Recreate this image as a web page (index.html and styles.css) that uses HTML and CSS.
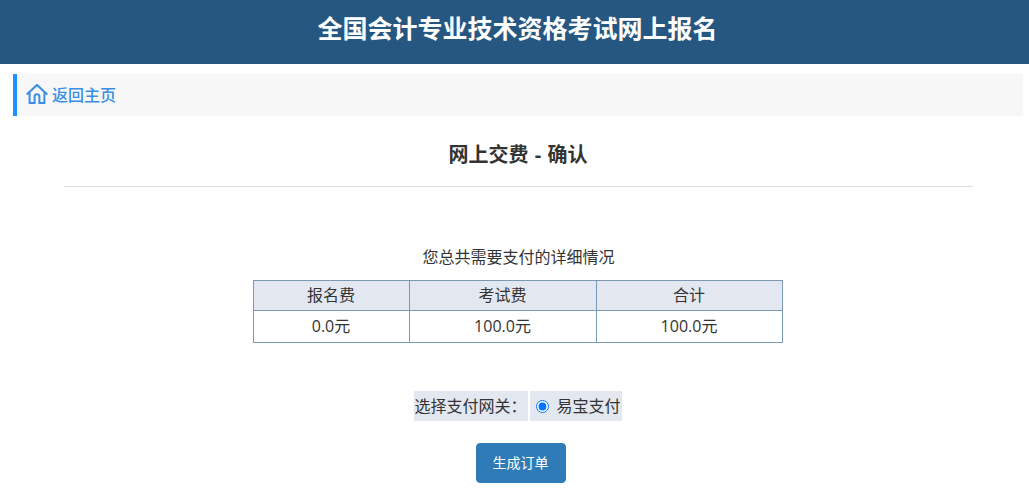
FILE: index.html
```html
<!DOCTYPE html>
<html lang="zh-CN">
<head>
<meta charset="utf-8">
<title>全国会计专业技术资格考试网上报名</title>
<link rel="stylesheet" href="styles.css">
</head>
<body>
<header class="site-header"><h1>全国会计专业技术资格考试网上报名</h1></header>
<nav class="back-bar">
  <a class="back-link" href="#">
    <svg class="home-icon" viewBox="0 0 22 20" width="22" height="20" aria-hidden="true"><path d="M.7 10.600 11 .9l10.300 9.700M3.600 8v11h5v-6.300a2.400 2.400 0 0 1 4.800 0V19h5V8" fill="none" stroke="currentColor" stroke-width="2"/></svg>
    <span>返回主页</span>
  </a>
</nav>
<main class="content">
  <h2 class="page-title">网上交费 - 确认</h2>
  <p class="summary">您总共需要支付的详细情况</p>
  <table class="fees">
    <tr class="head"><th class="c1">报名费</th><th class="c2">考试费</th><th class="c3">合计</th></tr>
    <tr><td>0.0元</td><td>100.0元</td><td>100.0元</td></tr>
  </table>
  <form class="pay">
    <div class="gateway">
      <span class="cell">选择支付网关：</span>
      <label class="cell option"><input type="radio" name="gw" checked><span>易宝支付</span></label>
    </div>
    <button type="button" class="submit">生成订单</button>
  </form>
</main>
</body>
</html>
```
FILE: styles.css
```css
* { box-sizing: border-box; }
html, body { margin: 0; padding: 0; }
body { background: #fff; color: #333; font-family: "Open Sans", "Noto Sans CJK SC", sans-serif; font-size: 16px; }
.site-header { height: 64px; padding-left: 6px; background: #265781; display: flex; align-items: center; justify-content: center; }
.site-header h1 { margin: 0 0 8px; color: #fff; font-size: 25px; font-weight: 700; line-height: 1; }
.back-bar { margin: 10px 6px 0 13px; height: 42px; background: #f7f7f7; border-left: 4px solid #1e90ff; display: flex; align-items: center; padding: 0 0 2px 9px; }
.back-link { display: flex; align-items: center; gap: 4px; color: #3a8ee6; font-size: 16px; font-weight: 500; text-decoration: none; }
.home-icon { display: block; }
.content { display: flex; flex-direction: column; align-items: center; padding-left: 8px; }
.page-title { width: 909px; margin: 0 0 0 -1px; padding: 25px 0 0; height: 71px; border-bottom: 1px solid #ddd; font-size: 20px; font-weight: 700; line-height: 28px; text-align: center; word-spacing: 1px; color: #333; }
.summary { margin: 59px 0 0; line-height: 22px; height: 22px; }
.fees { width: 530px; margin: 12px 0 0 -2px; border-collapse: collapse; table-layout: fixed; font-size: 16px; }
.fees th, .fees td { border: 1px solid #7a99b5; text-align: center; font-weight: 400; padding: 0 0 2px; line-height: 24px; }
.fees .head th { height: 30px; background: #e3e8f0; }
.fees td { height: 32px; }
.c1 { width: 156px; }
.c2 { width: 187px; }
.pay { display: flex; flex-direction: column; align-items: center; margin: 48px 0 0 -2px; }
.gateway { display: flex; gap: 2px; height: 30px; }
.cell { background: #e3e8f0; display: flex; align-items: center; white-space: nowrap; height: 30px; padding-bottom: 2px; }
.cell:first-child { width: 114px; padding-left: 1px; }
.option { width: 92px; }
.option input { margin: 3px 8px 0 6px; width: 13px; height: 13px; accent-color: #0075ff; }
.submit { margin: 22px 0 0 6px; width: 90px; height: 40px; padding: 0 0 2px; background: #2f7bb8; border: 1px solid #2f7bb8; border-radius: 4px; color: #fff; font: inherit; font-size: 14px; }
```
